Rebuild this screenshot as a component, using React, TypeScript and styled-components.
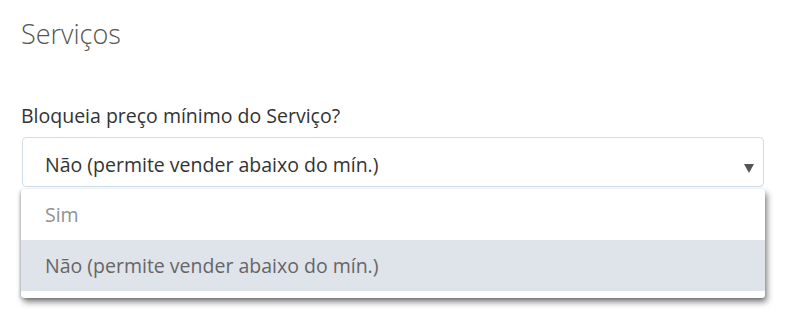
import React from "react";
import styled, { createGlobalStyle } from "styled-components";

const Global = createGlobalStyle`
  html, body { margin: 0; padding: 0; background: #ffffff; }
  body { font-family: "Open Sans", "Liberation Sans", sans-serif; }
`;

const Page = styled.div`
  display: flex;
  flex-direction: column;
  padding: 16px 23px 18px 21px;
`;

const Title = styled.h2`
  margin: 0;
  font-size: 27px;
  line-height: 36px;
  font-weight: 300;
  color: #555555;
`;

const Field = styled.div`
  display: flex;
  flex-direction: column;
  margin-top: 51px;
`;

const Label = styled.label`
  font-size: 19.5px;
  line-height: 26px;
  color: #333333;
  margin-bottom: 8px;
`;

const SelectWrap = styled.div`
  display: flex;
  flex-direction: column;
  gap: 2px;
`;

const SelectBox = styled.div`
  display: flex;
  align-items: flex-start;
  justify-content: space-between;
  height: 50px;
  box-sizing: border-box;
  margin: 0 1px;
  padding: 14px 9px 0 22px;
  border: 1px solid #cfdde9;
  border-radius: 4px;
  font-size: 19.5px;
  line-height: 26px;
  color: #333333;
`;

const Arrow = styled.svg`
  margin-top: 12px;
  width: 10px;
  height: 9px;
`;

const Menu = styled.ul`
  margin: 0;
  padding: 0 0 7px;
  list-style: none;
  background: #ffffff;
  border-radius: 3px;
  box-shadow: 2px 4px 6px rgba(0, 0, 0, 0.5), -1px 1px 3px rgba(0, 0, 0, 0.2);
`;

const Option = styled.li<{ $active?: boolean; $muted?: boolean }>`
  padding: 13px 24px 12px;
  font-size: 19.5px;
  line-height: 26px;
  color: ${(p) => (p.$muted ? "#929292" : "#666666")};
  background: ${(p) => (p.$active ? "#dfe3ea" : "transparent")};
`;

export default function App() {
  return (
    <>
      <Global />
      <Page>
        <Title>Serviços</Title>
        <Field>
          <Label>Bloqueia preço mínimo do Serviço?</Label>
          <SelectWrap>
            <SelectBox>
              <span>Não (permite vender abaixo do mín.)</span>
              <Arrow viewBox="0 0 10 9">
                <polygon points="0,0 10,0 5,9" fill="#555555" />
              </Arrow>
            </SelectBox>
            <Menu>
              <Option $muted>Sim</Option>
              <Option $active>Não (permite vender abaixo do mín.)</Option>
            </Menu>
          </SelectWrap>
        </Field>
      </Page>
    </>
  );
}
